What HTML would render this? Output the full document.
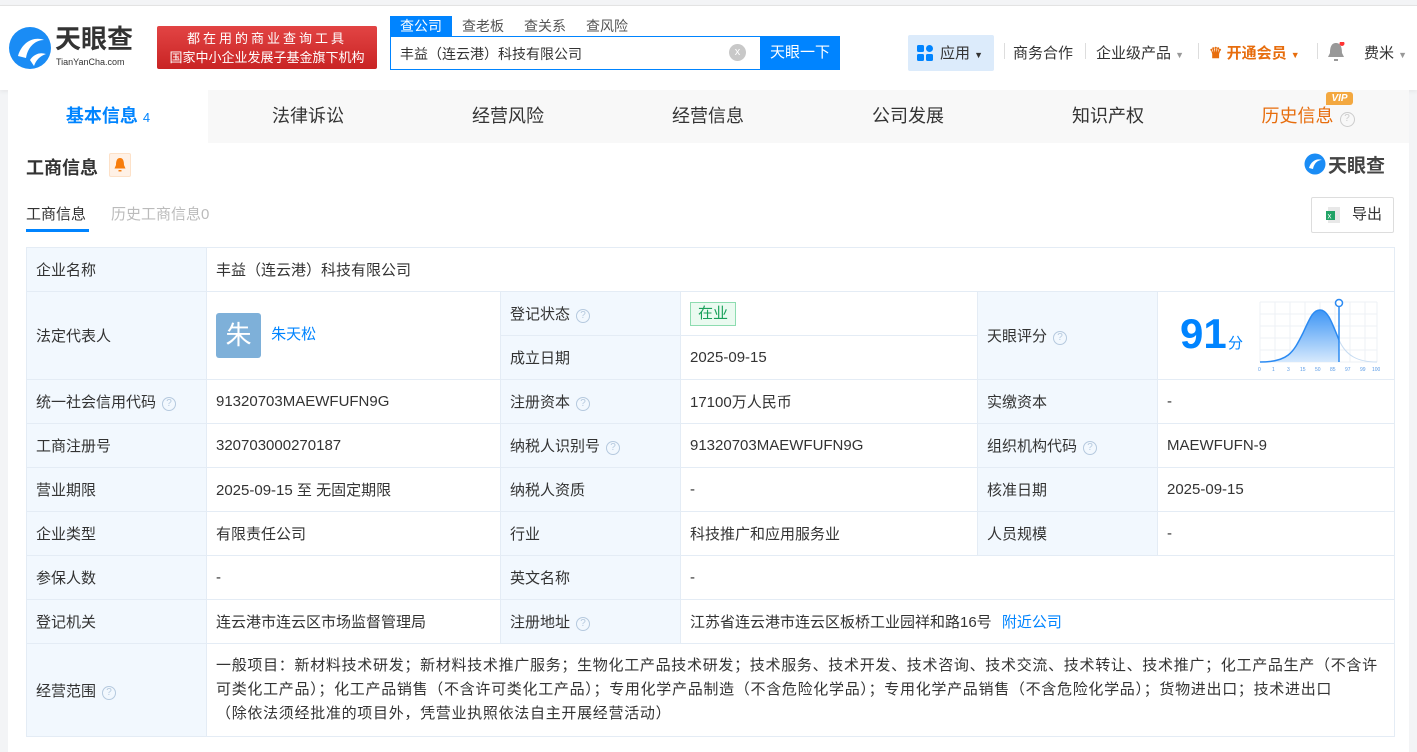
<!DOCTYPE html><html><head><meta charset="utf-8"><style>
*{box-sizing:border-box;margin:0;padding:0}
body{width:1417px;height:752px;overflow:hidden;background:#f3f4f6;font-family:"Liberation Sans","Noto Sans CJK SC",sans-serif;color:#333;font-size:15px;position:relative}
.a{position:absolute}
.hdr{left:0;top:5px;width:1417px;height:85px;background:#fff;border-top:1px solid #e3e3e3;box-shadow:0 2px 4px rgba(0,0,0,.05)}
.card{left:8px;top:90px;width:1401px;height:662px;background:#fff}
table{border-collapse:collapse;position:absolute;left:26px;top:247px;width:1368px;table-layout:fixed}
td{border:1px solid #e4ecf5;padding:0 9px;font-size:15px;color:#333;height:44px;vertical-align:middle}
td.l{background:#f2f8fe}
.q{display:inline-block;width:14px;height:14px;border:1px solid #b5c9de;border-radius:50%;font-size:10px;color:#b5c9de;text-align:center;line-height:12px;margin-left:6px;vertical-align:1px}
.tab{top:0;height:53px;width:200px;text-align:center;line-height:53px;font-size:18px;color:#333}
.st{top:16px;font-size:14px;color:#555;line-height:20px}
</style></head><body>
<div class="a hdr"></div>
<svg class="a" style="left:8px;top:26px" width="44" height="44" viewBox="0 0 44 44"><circle cx="22" cy="22" r="21" fill="#1a8cf5"/><path d="M10 30 C14 16 26 10 36 14 C28 14 20 20 18 32 Z" fill="#fff"/><path d="M22 34 C26 28 32 26 38 28 C32 30 28 34 26 40 Z" fill="#fff"/></svg>
<div class="a" style="left:55px;top:24px;font-size:26px;font-weight:bold;color:#333;line-height:30px">天眼查</div>
<div class="a" style="left:56px;top:57px;font-size:9px;color:#333;line-height:10px">TianYanCha.com</div>
<div class="a" style="left:157px;top:26px;width:220px;height:43px;background:linear-gradient(#e24444,#c92424);border-radius:2px;color:#fff;font-size:13px;text-align:center;line-height:19px;padding-top:3px"><div style="letter-spacing:3px">都在用的商业查询工具</div><div>国家中小企业发展子基金旗下机构</div></div>
<div class="a" style="left:390px;top:16px;width:62px;height:20px;background:#0084ff;color:#fff;font-size:14px;text-align:center;line-height:20px">查公司</div>
<div class="a st" style="left:462px">查老板</div>
<div class="a st" style="left:524px">查关系</div>
<div class="a st" style="left:586px">查风险</div>
<div class="a" style="left:390px;top:36px;width:450px;height:34px;border:1px solid #0084ff;background:#fff"></div>
<div class="a" style="left:400px;top:44px;font-size:14px;color:#333">丰益（连云港）科技有限公司</div>
<div class="a" style="left:729px;top:44px;width:17px;height:17px;border-radius:50%;background:#c8c8c8;color:#fff;font-size:11px;text-align:center;line-height:17px">x</div>
<div class="a" style="left:760px;top:36px;width:80px;height:34px;background:#0084ff;color:#fff;font-size:15px;text-align:center;line-height:34px">天眼一下</div>
<div class="a" style="left:908px;top:35px;width:86px;height:36px;background:#dcebfb;border-radius:2px"></div>
<svg class="a" style="left:917px;top:45px" width="16" height="16"><rect x="0" y="0" width="7" height="7" rx="1.5" fill="#0084ff"/><rect x="9" y="0" width="7" height="7" rx="3.5" fill="#0084ff"/><rect x="0" y="9" width="7" height="7" rx="1.5" fill="#0084ff"/><rect x="9" y="9" width="7" height="7" rx="1.5" fill="#0084ff"/></svg>
<div class="a" style="left:940px;top:42px;font-size:15px;color:#333">应用 <span style="font-size:9px">▼</span></div>
<div class="a" style="left:1013px;top:42px;font-size:15px;color:#333">商务合作</div>
<div class="a" style="left:1096px;top:42px;font-size:15px;color:#333">企业级产品 <span style="font-size:9px;color:#999">▼</span></div>
<div class="a" style="left:1209px;top:42px;font-size:15px;color:#e76d0d;font-weight:bold">♛ 开通会员 <span style="font-size:9px">▼</span></div>
<div class="a" style="left:1004px;top:43px;width:1px;height:16px;background:#ddd"></div>
<div class="a" style="left:1085px;top:43px;width:1px;height:16px;background:#ddd"></div>
<div class="a" style="left:1198px;top:43px;width:1px;height:16px;background:#ddd"></div>
<div class="a" style="left:1317px;top:43px;width:1px;height:16px;background:#ddd"></div>
<svg class="a" style="left:1327px;top:42px" width="18" height="20"><path d="M9 1 C4 1 3 6 3 11 L1 15 H17 L15 11 C15 6 14 1 9 1Z M7 17 H11 V19 H7Z" fill="#999"/><circle cx="15" cy="1.5" r="2.5" fill="#f33"/></svg>
<div class="a" style="left:1364px;top:42px;font-size:15px;color:#333">费米 <span style="font-size:9px;color:#999">▼</span></div>

<div class="a card">
<div class="a" style="left:0;top:0;width:1401px;height:53px;background:#f8f8f8"></div>
<div class="a tab" style="left:0;background:#fff;color:#0084ff;font-weight:bold">基本信息 <span style="font-size:13px;font-weight:normal">4</span></div>
<div class="a tab" style="left:200px">法律诉讼</div>
<div class="a tab" style="left:400px">经营风险</div>
<div class="a tab" style="left:600px">经营信息</div>
<div class="a tab" style="left:800px">公司发展</div>
<div class="a tab" style="left:1000px">知识产权</div>
<div class="a tab" style="left:1200px;color:#e76d0d">历史信息<span class="q" style="width:15px;height:15px;border-color:#ccc;color:#ccc">?</span></div>
<div class="a" style="left:1318px;top:2px;width:27px;height:13px;background:#f3a840;color:#fff;font-size:10px;font-weight:bold;font-style:italic;text-align:center;line-height:13px;border-radius:3px 3px 3px 0">VIP</div>
<div class="a" style="left:18px;top:64px;font-size:18px;font-weight:bold;color:#333">工商信息</div>
<div class="a" style="left:101px;top:63px;width:22px;height:24px;background:#fff1e6;border:1px solid #fde1c8;border-radius:2px"></div>
<svg class="a" style="left:105px;top:67px" width="14" height="16"><path d="M7 1 C3.5 1 3 5 3 8 L1.5 11.5 H12.5 L11 8 C11 5 10.5 1 7 1Z M5.5 13 H8.5 V14.5 H5.5Z" fill="#f77d0d"/></svg>
<svg class="a" style="left:1296px;top:63px" width="22" height="22"><circle cx="11" cy="11" r="10.5" fill="#1a8cf5"/><path d="M5 15 C7 8 13 5 18 7 C14 7 10 10 9 16Z" fill="#fff"/></svg>
<div class="a" style="left:1320px;top:61px;font-size:19px;font-weight:bold;color:#444">天眼查</div>
<div class="a" style="left:18px;top:113px;font-size:15px;color:#333">工商信息</div>
<div class="a" style="left:18px;top:139px;width:63px;height:3px;background:#0084ff"></div>
<div class="a" style="left:103px;top:113px;font-size:15px;color:#bbb">历史工商信息0</div>
<div class="a" style="left:1303px;top:107px;width:83px;height:36px;border:1px solid #ddd;border-radius:2px;font-size:15px;line-height:34px;padding-left:40px;color:#333">导出</div>
<svg class="a" style="left:1318px;top:117px" width="14" height="16"><rect x="2" y="0" width="12" height="16" fill="#e8e8e8"/><rect x="0" y="4" width="9" height="9" fill="#21a366"/><text x="1.5" y="11.5" font-size="8" fill="#fff" font-family="Liberation Sans">x</text></svg>
</div>

<table>
<colgroup><col style="width:180px"><col style="width:294px"><col style="width:180px"><col style="width:297px"><col style="width:180px"><col style="width:237px"></colgroup>
<tr><td class="l">企业名称</td><td colspan="5">丰益（连云港）科技有限公司</td></tr>
<tr><td class="l" rowspan="2" style="height:88px">法定代表人</td><td rowspan="2"><span style="display:inline-block;width:45px;height:45px;background:#7eb0d9;border-radius:3px;color:#fff;font-size:26px;text-align:center;line-height:45px;vertical-align:middle">朱</span> <span style="color:#0084ff;margin-left:6px">朱天松</span></td><td class="l">登记状态<span class="q">?</span></td><td><span style="display:inline-block;border:1px solid #8ddcb0;background:#eafaf0;color:#19a05a;padding:0 7px;line-height:22px">在业</span></td><td class="l" rowspan="2">天眼评分<span class="q">?</span></td><td rowspan="2" style="position:relative"><span style="position:absolute;left:22px;top:18px;font-size:42px;font-weight:bold;color:#0084ff">91</span><span style="position:absolute;left:70px;top:40px;font-size:15px;color:#0084ff">分</span>
<svg style="position:absolute;left:100px;top:6px" width="122" height="76" viewBox="0 0 122 76"><defs><linearGradient id="g" x1="0" y1="0" x2="0" y2="1"><stop offset="0" stop-color="#3d95f5"/><stop offset="1" stop-color="#d6e9fd"/></linearGradient></defs><g stroke="#edf1f6" stroke-width="1"><path d="M2 4H119M2 16H119M2 28H119M2 40H119M2 52H119M2 64H119M2 4V64M17 4V64M32 4V64M47 4V64M62 4V64M77 4V64M92 4V64M107 4V64M119 4V64"/></g><path d="M2 64 C30 64 35 55 45 35 C52 20 55 12 62 12 C70 12 74 25 81 42 L81 64Z" fill="url(#g)"/><path d="M81 42 C88 58 100 64 119 64" stroke="#c7dcf2" fill="none"/><path d="M2 64 C30 64 35 55 45 35 C52 20 55 12 62 12 C70 12 74 25 81 42" stroke="#2b8af2" stroke-width="1.5" fill="none"/><line x1="81" y1="6" x2="81" y2="64" stroke="#2b8af2" stroke-width="1.5"/><circle cx="81" cy="5" r="3.5" fill="#fff" stroke="#2b8af2" stroke-width="1.5"/><g font-size="5" fill="#5a9be6" font-family="Liberation Sans"><text x="0" y="73">0</text><text x="14" y="73">1</text><text x="29" y="73">3</text><text x="42" y="73">15</text><text x="57" y="73">50</text><text x="72" y="73">85</text><text x="87" y="73">97</text><text x="102" y="73">99</text><text x="114" y="73">100</text></g></svg></td></tr>
<tr><td class="l">成立日期</td><td>2025-09-15</td></tr>
<tr><td class="l">统一社会信用代码<span class="q">?</span></td><td>91320703MAEWFUFN9G</td><td class="l">注册资本<span class="q">?</span></td><td>17100万人民币</td><td class="l">实缴资本</td><td>-</td></tr>
<tr><td class="l">工商注册号</td><td>320703000270187</td><td class="l">纳税人识别号<span class="q">?</span></td><td>91320703MAEWFUFN9G</td><td class="l">组织机构代码<span class="q">?</span></td><td>MAEWFUFN-9</td></tr>
<tr><td class="l">营业期限</td><td>2025-09-15 至 无固定期限</td><td class="l">纳税人资质</td><td>-</td><td class="l">核准日期</td><td>2025-09-15</td></tr>
<tr><td class="l">企业类型</td><td>有限责任公司</td><td class="l">行业</td><td>科技推广和应用服务业</td><td class="l">人员规模</td><td>-</td></tr>
<tr><td class="l">参保人数</td><td>-</td><td class="l">英文名称</td><td colspan="3">-</td></tr>
<tr><td class="l">登记机关</td><td>连云港市连云区市场监督管理局</td><td class="l">注册地址<span class="q">?</span></td><td colspan="3">江苏省连云港市连云区板桥工业园祥和路16号 <span style="color:#0084ff;margin-left:6px">附近公司</span></td></tr>
<tr><td class="l" style="height:93px">经营范围<span class="q">?</span></td><td colspan="5" style="line-height:24px;white-space:nowrap;letter-spacing:0.7px">一般项目：新材料技术研发；新材料技术推广服务；生物化工产品技术研发；技术服务、技术开发、技术咨询、技术交流、技术转让、技术推广；化工产品生产（不含许<br>可类化工产品）；化工产品销售（不含许可类化工产品）；专用化学产品制造（不含危险化学品）；专用化学产品销售（不含危险化学品）；货物进出口；技术进出口<br>（除依法须经批准的项目外，凭营业执照依法自主开展经营活动）</td></tr>
</table>
</body></html>
